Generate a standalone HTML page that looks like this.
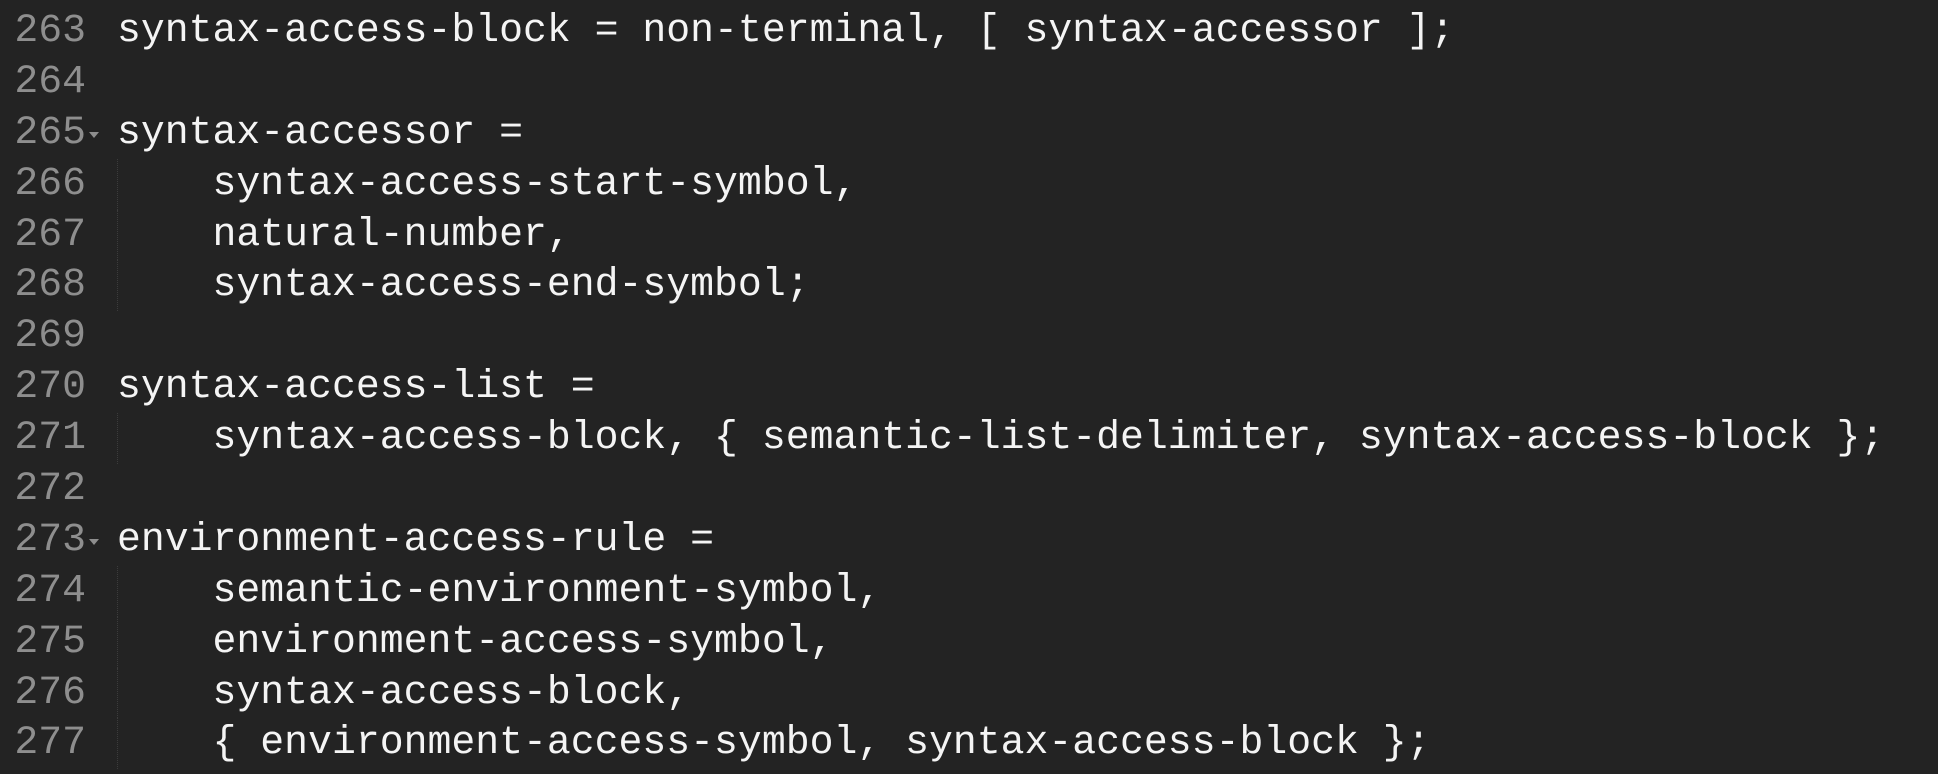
<!DOCTYPE html>
<html><head><meta charset="utf-8"><style>
html,body{margin:0;padding:0;background:#232323;width:1938px;height:774px;overflow:hidden}
.wrap{position:absolute;top:6px;left:0;font-family:"Liberation Mono","DejaVu Sans Mono",monospace;font-size:39.8px;line-height:50.9px}
.l{position:relative;height:50.9px;white-space:pre}
.n{position:absolute;left:0;width:86px;text-align:right;color:#8e8e8e}
.c{position:absolute;left:117px;color:#f4f4f4}
.g{position:absolute;left:117px;top:0;width:1px;height:50.9px;border-left:1px dotted #3c3c3c}
.f{position:absolute;left:89px;top:24px;width:0;height:0;border-left:5px solid transparent;border-right:5px solid transparent;border-top:6px solid #8e8e8e}
</style></head><body><div class="wrap">
<div class="l"><span class="n">263</span><span class="c">syntax-access-block = non-terminal, [ syntax-accessor ];</span></div>
<div class="l"><span class="n">264</span></div>
<div class="l"><span class="n">265</span><span class="f"></span><span class="c">syntax-accessor =</span></div>
<div class="l"><span class="n">266</span><span class="g"></span><span class="c">    syntax-access-start-symbol,</span></div>
<div class="l"><span class="n">267</span><span class="g"></span><span class="c">    natural-number,</span></div>
<div class="l"><span class="n">268</span><span class="g"></span><span class="c">    syntax-access-end-symbol;</span></div>
<div class="l"><span class="n">269</span></div>
<div class="l"><span class="n">270</span><span class="c">syntax-access-list =</span></div>
<div class="l"><span class="n">271</span><span class="g"></span><span class="c">    syntax-access-block, { semantic-list-delimiter, syntax-access-block };</span></div>
<div class="l"><span class="n">272</span></div>
<div class="l"><span class="n">273</span><span class="f"></span><span class="c">environment-access-rule =</span></div>
<div class="l"><span class="n">274</span><span class="g"></span><span class="c">    semantic-environment-symbol,</span></div>
<div class="l"><span class="n">275</span><span class="g"></span><span class="c">    environment-access-symbol,</span></div>
<div class="l"><span class="n">276</span><span class="g"></span><span class="c">    syntax-access-block,</span></div>
<div class="l"><span class="n">277</span><span class="g"></span><span class="c">    { environment-access-symbol, syntax-access-block };</span></div>
</div></body></html>
